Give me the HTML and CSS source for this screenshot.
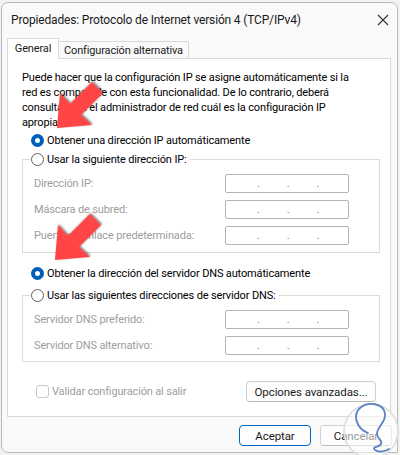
FILE: index.html
```html
<!DOCTYPE html>
<html lang="es">
<head>
    <meta charset="UTF-8">
    <title>Propiedades TCP/IPv4</title>
    <link rel="stylesheet" href="styles.css">
</head>
<body>
    <div class="window">
        <div class="titlebar">
            <span class="title">Propiedades: Protocolo de Internet versión 4 (TCP/IPv4)</span>
            <svg class="close" width="12" height="12" viewBox="0 0 12 12">
                <path d="M1 1 L11 11 M11 1 L1 11" stroke="#333" stroke-width="1.1" fill="none"/>
            </svg>
        </div>

        <div class="tabs">
            <div class="tab active">General</div>
            <div class="tab">Configuración alternativa</div>
        </div>

        <div class="panel">
            <p class="intro">Puede hacer que la configuración IP se asigne automáticamente si la<br>red es compatible con esta funcionalidad. De lo contrario, deberá<br>consultar con el administrador de red cuál es la configuración IP<br>apropiada.</p>

            <label class="option first"><span class="radio checked"></span>Obtener una dirección IP automáticamente</label>

            <fieldset class="group group-ip">
                <legend class="option"><span class="radio"></span>Usar la siguiente dirección IP:</legend>
                <div class="field"><span>Dirección IP:</span><span class="ipbox"><i>.</i><i>.</i><i>.</i></span></div>
                <div class="field"><span>Máscara de subred:</span><span class="ipbox"><i>.</i><i>.</i><i>.</i></span></div>
                <div class="field"><span>Puerta de enlace predeterminada:</span><span class="ipbox"><i>.</i><i>.</i><i>.</i></span></div>
            </fieldset>

            <label class="option dns-auto"><span class="radio checked"></span>Obtener la dirección del servidor DNS automáticamente</label>

            <fieldset class="group group-dns">
                <legend class="option"><span class="radio"></span>Usar las siguientes direcciones de servidor DNS:</legend>
                <div class="field"><span>Servidor DNS preferido:</span><span class="ipbox"><i>.</i><i>.</i><i>.</i></span></div>
                <div class="field"><span>Servidor DNS alternativo:</span><span class="ipbox"><i>.</i><i>.</i><i>.</i></span></div>
            </fieldset>

            <div class="panel-foot">
                <label class="check"><span class="box"></span>Validar configuración al salir</label>
                <button class="btn">Opciones avanzadas...</button>
            </div>
        </div>

        <div class="actions">
            <button class="btn primary">Aceptar</button>
            <button class="btn">Cancelar</button>
        </div>
    </div>

    <!-- annotation arrows and watermark drawn over the dialog -->
    <svg class="overlay" width="400" height="455" viewBox="0 0 400 455">
        <defs>
            <filter id="shade" x="-20%" y="-20%" width="140%" height="140%">
                <feDropShadow dx="1" dy="-1" stdDeviation="1" flood-color="#000" flood-opacity="0.55"/>
            </filter>
        </defs>
        <polygon class="arrow" filter="url(#shade)" points="57,128 60,93 70,104 92,82 103,93 81,115 92,125"/>
        <polygon class="arrow" filter="url(#shade)" points="55,260 58,225 68,236 90,214 101,225 79,247 90,257"/>
        <circle cx="371" cy="431" r="27" fill="rgba(255,255,255,0.55)" stroke="#dcdcdc" stroke-width="1.5"/>
        <path d="M368 433 C357 429 352 415 360 408 C368 401 384 403 385 414 C386 422 378 426 377 433 C376 438 383 440 381 444 C379 448 371 446 375 450 C379 453 386 451 389 449" fill="none" stroke="#5d82c4" stroke-width="1.8" stroke-linecap="round"/>
    </svg>
</body>
</html>
```

FILE: styles.css
```css
* {
    box-sizing: border-box;
}
body {
    margin: 0;
    width: 400px;
    height: 455px;
    background: #f2f2f2;
    font-family: Roboto, 'Noto Sans', sans-serif;
    font-size: 11px;
    letter-spacing: -0.15px;
    color: #000;
    position: relative;
    overflow: hidden;
}
.window {
    margin: 2px 0 0 1px;
    width: 397px;
    height: 451px;
    background: #f9f9f9;
    border: 1px solid #b9b9b9;
    border-radius: 7px 7px 0 7px;
    display: flex;
    flex-direction: column;
}
.titlebar {
    height: 35px;
    display: flex;
    align-items: center;
    justify-content: space-between;
    padding: 0 8px 2px 9px;
}
.title {
    font-size: 12px;
    letter-spacing: -0.16px;
    color: #1a1a1a;
}
.tabs {
    display: flex;
    align-items: flex-end;
    margin: 0 0 -1px 5px;
    position: relative;
    z-index: 1;
}
.tab {
    height: 18px;
    width: 130px;
    justify-content: center;
    border: 1px solid #d9d9d9;
    border-left: 0;
    display: flex;
    align-items: center;
    color: #1a1a1a;
}
.tab.active {
    height: 21px;
    width: 52px;
    padding-bottom: 2px;
    background: #fff;
    border-left: 1px solid #d9d9d9;
    border-bottom: 0;
}
.panel {
    margin: 0 6px 0 5px;
    background: #fff;
    border: 1px solid #d9d9d9;
    padding: 11px 10px 14px 14px;
}
.intro {
    margin: 0;
    line-height: 15px;
    white-space: nowrap;
}
.option {
    display: flex;
    align-items: center;
    height: 18px;
    white-space: nowrap;
}
.option.first {
    margin: 1px 0 0 9px;
}
.option.dns-auto {
    margin: 11px 0 0 9px;
}
.radio {
    width: 13px;
    height: 13px;
    border-radius: 50%;
    border: 1px solid #5f5f5f;
    background: #fff;
    margin-right: 3px;
    flex-shrink: 0;
}
.radio.checked {
    border: 4px solid #005fb8;
}
.group {
    margin: 1px 0 0 0;
    padding: 0 30px 7px 11px;
    border: 1px solid #dcdcdc;
    min-width: 0;
}
.group legend {
    margin-left: -3px;
    padding: 0 3px 0 0;
}
.group-dns {
    margin-top: 4px;
    padding-bottom: 6px;
}
.field {
    display: flex;
    align-items: center;
    justify-content: space-between;
    height: 19px;
    margin-top: 7px;
    color: #9d9d9d;
    white-space: nowrap;
}
.field:first-of-type {
    margin-top: 6px;
}
.ipbox {
    width: 124px;
    height: 19px;
    border: 1px solid #b3b3b3;
    border-radius: 2px;
    background: #fff;
    display: flex;
    gap: 27px;
    padding-left: 31px;
    line-height: 17px;
    color: #7a7a7a;
}
.ipbox i {
    font-style: normal;
}
.panel-foot {
    margin-top: 19px;
    height: 21px;
    display: flex;
    align-items: center;
    justify-content: space-between;
}
.check {
    display: flex;
    align-items: center;
    margin-left: 14px;
    color: #9d9d9d;
}
.check .box {
    width: 13px;
    height: 13px;
    border: 1px solid #c8c8c8;
    border-radius: 3px;
    margin-right: 3px;
}
.btn {
    font-family: Roboto, 'Noto Sans', sans-serif;
    font-size: 11.5px;
    letter-spacing: -0.1px;
    color: #1a1a1a;
    background: #fdfdfd;
    border: 1px solid #d0d0d0;
    border-bottom-color: #bcbcbc;
    border-radius: 4px;
    height: 21px;
    width: 130px;
    padding: 0;
    margin-right: 4px;
}
.actions {
    display: flex;
    justify-content: flex-end;
    gap: 9px;
    margin-top: 8px;
    padding-right: 5px;
}
.actions .btn {
    width: 72px;
    margin: 0;
}
.btn.primary {
    border: 1px solid #0067c0;
}
.overlay {
    position: absolute;
    top: 0;
    left: 0;
    pointer-events: none;
}
.arrow {
    fill: #ff4545;
}
```
